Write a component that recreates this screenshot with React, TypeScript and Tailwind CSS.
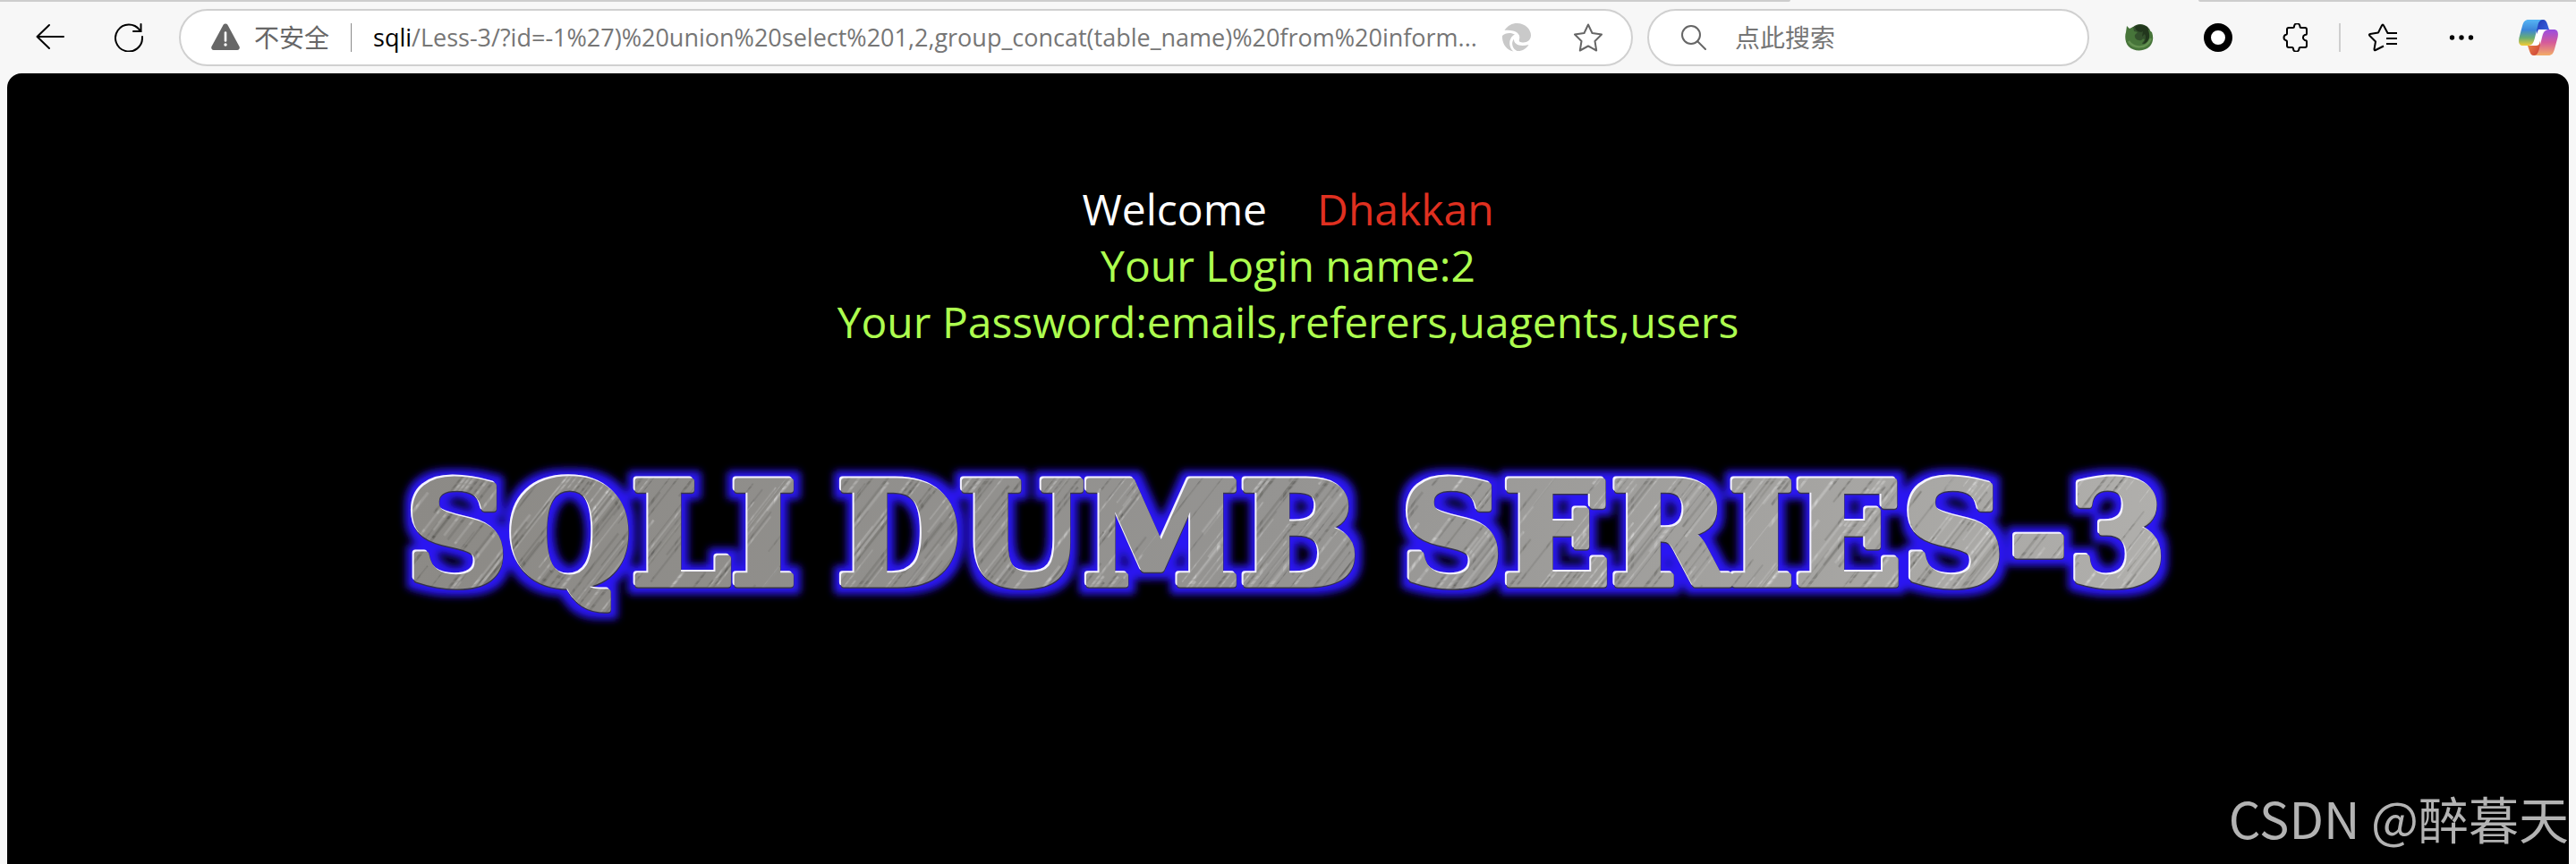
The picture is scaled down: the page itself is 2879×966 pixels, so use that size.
const SANS = "font-['Open_Sans','Noto_Sans_CJK_SC',sans-serif]";

function BackIcon() {
  return (
    <svg className="size-8" viewBox="0 0 32 32" fill="none" stroke="#000" strokeWidth="2" strokeLinecap="round" strokeLinejoin="round">
      <path d="M31 15H1.500M15 2L1.500 15L15 28" />
    </svg>
  );
}

function ReloadIcon() {
  return (
    <svg className="size-8" viewBox="0 0 32 32" fill="none" stroke="#000" strokeWidth="2" strokeLinecap="round">
      <path d="M31 15V16A15 15 0 1 1 28 7.500M29.500 1V9H21" />
    </svg>
  );
}

function WarningIcon() {
  return (
    <svg className="size-8 shrink-0" viewBox="0 0 32 32">
      <path d="M13.600 1.800a2.800 2.800 0 0 1 4.800 0L31.500 26a2.800 2.800 0 0 1-2.400 4H2.900a2.800 2.800 0 0 1-2.400-4Z" fill="#676767" />
      <path d="M16 10.500v9" stroke="#fff" strokeWidth="2.600" strokeLinecap="round" />
      <circle cx="16" cy="24" r="1.700" fill="#fff" />
    </svg>
  );
}

function SwirlIcon() {
  return (
    <svg className="size-8" viewBox="0 0 32 32" fill="#c9c9c9">
      <path d="M2.500 8C6 2.500 11 0 16.500 0C25.500 0 32 7 32 13.500C32 18.500 28 21.500 23.500 21.500C20 21.500 18 20.500 19 18C20.500 13.500 17 9.500 12 8.500C8 7.500 5 7.500 2.500 8Z" />
      <path d="M0 14C3 10.500 10 10 14 12.500C9.500 14.500 7.500 20 8.500 25C9 27.500 10.500 30 12.500 31.500C4 29.500-.500 22 0 14Z" />
      <path d="M13 17.500C12.500 23 19 27 29.500 24C27 28.500 22 31.500 16.500 31C11 28.500 9.500 21.500 13 17.500Z" />
    </svg>
  );
}

function StarIcon() {
  return (
    <svg className="size-8" viewBox="0 0 32 32" fill="none" stroke="#666" strokeWidth="2" strokeLinejoin="round">
      <path d="M16 1.500L20.500 11L31 12.500L23.500 20L25.200 30.500L16 25.500L6.800 30.500L8.500 20L1 12.500L11.500 11Z" />
    </svg>
  );
}

function SearchIcon() {
  return (
    <svg className="size-7 shrink-0" viewBox="0 0 28 28" fill="none" stroke="#666" strokeWidth="2" strokeLinecap="round">
      <circle cx="11" cy="11" r="10" />
      <path d="M18 18L27 27" />
    </svg>
  );
}

function GreenBallIcon() {
  return (
    <svg className="size-8" viewBox="0 0 32 32">
      <circle cx="17" cy="13" r="12" fill="#33502c" />
      <path d="M2 3L5 6L9 4L10 9L14 10L11 13C10 17 14 20 18 19C20 18 19 17 22 18C20 22 16 24 22 23C28 20 27 12 26 7L30 10C33 18 30 25 25 28C18 32 9 31 4 26C0 22-.500 14 1 10Z" fill="#47753a" />
      <path d="M11 4C15 1 20 2 25 4L27 12C28 17 25 22 20 23C23 20 24 15 22 12L19 15L20 9C17 11 14 9 12 7Z" fill="#22371d" />
      <path d="M4 20C9 28 24 30 29 17" fill="none" stroke="#639150" strokeWidth="2.500" />
    </svg>
  );
}

function RingIcon() {
  return (
    <svg className="size-8" viewBox="0 0 32 32">
      <circle cx="16" cy="16" r="12" fill="#fff" stroke="#000" strokeWidth="8" />
    </svg>
  );
}

function PuzzleIcon() {
  return (
    <svg className="size-8" viewBox="0 0 32 32" fill="none" stroke="#000" strokeWidth="2" strokeLinejoin="round">
      <path d="M7 5H11.500Q13 5 13 3.500A3.200 3.200 0 0 1 19.500 3.500Q19.500 5 21 5H25Q27 5 27 7V11.500Q27 13 25 13A3.200 3.200 0 0 0 25 19Q27 19 27 20.500V25Q27 27 25 27H20Q18.500 27 18.500 28.500A3.200 3.200 0 0 1 12 28.500Q12 27 10.500 27H7Q5 27 5 25V20.500Q5 19.500 4 19.200A3.300 3.300 0 0 1 4 12.800Q5 12.500 5 11.500V7Q5 5 7 5Z" />
    </svg>
  );
}

function FavoritesIcon() {
  return (
    <svg className="size-8" viewBox="0 0 32 32" fill="none" stroke="#000" strokeWidth="2" strokeLinejoin="round">
      <path d="M32 11H21.500L17 2.500Q16 .5 15 2.500L11 10.500L2 12Q0 12.500 1.500 14L8 20.500L6.500 29Q6.500 31 8 30L17 25.500M20 17H32M20 23H32" />
    </svg>
  );
}

function MoreIcon() {
  return (
    <svg className="size-8" viewBox="0 0 32 32">
      <circle cx="5.500" cy="16" r="2.700" />
      <circle cx="16" cy="16" r="2.700" />
      <circle cx="26.500" cy="16" r="2.700" />
    </svg>
  );
}

function CopilotIcon() {
  return (
    <svg className="h-10 w-11" viewBox="0 0 44 40">
      <defs>
        <linearGradient id="cp-left" x1="0" y1="0" x2="0" y2="1">
          <stop offset="0" stopColor="#56b5f5" />
          <stop offset=".4" stopColor="#3c86d8" />
          <stop offset=".7" stopColor="#69ad72" />
          <stop offset="1" stopColor="#f4cc35" />
        </linearGradient>
        <linearGradient id="cp-right" x1="0" y1="0" x2="0" y2="1">
          <stop offset="0" stopColor="#984de2" />
          <stop offset=".5" stopColor="#d55b9a" />
          <stop offset="1" stopColor="#f3ad66" />
        </linearGradient>
        <linearGradient id="cp-top" x1="0" y1="0" x2="1" y2="1">
          <stop offset="0" stopColor="#2038b5" />
          <stop offset="1" stopColor="#3f6ee8" />
        </linearGradient>
        <linearGradient id="cp-bottom" x1="0" y1="0" x2="1" y2="1">
          <stop offset="0" stopColor="#f4924a" />
          <stop offset="1" stopColor="#c93c36" />
        </linearGradient>
      </defs>
      <path d="M20 0H27C30 0 31 2 32 5L34 11H27C23 11 22 14 20 19Z" fill="url(#cp-top)" />
      <path d="M24 40H17C14 40 13 38 12 35L10 29H17C21 29 22 26 24 21Z" fill="url(#cp-bottom)" />
      <path d="M22 11H29C27 13 26.500 15 26 17L23 27C22 29 20 29 17 29H15Z" fill="#fff" />
      <path d="M11 0H27C24 0 22 3 21.500 6L17.500 22C16 27 14 29 10 29H5C0 29-.500 25 .5 20L4 7C5.500 2 7 0 11 0Z" fill="url(#cp-left)" />
      <path d="M33 40H17C20 40 21.500 37 22.500 34L26.500 18C28 13 30 11 34 11H39C44 11 44.500 15 43.500 20L40 33C38.500 38 37 40 33 40Z" fill="url(#cp-right)" />
    </svg>
  );
}

function Toolbar() {
  return (
    <header className="flex h-[82px] items-center pt-[2px] text-[28px] leading-10">
      <nav className="flex w-[200px] shrink-0 items-center gap-14 pl-10">
        <button type="button" aria-label="Back"><BackIcon /></button>
        <button type="button" aria-label="Reload"><ReloadIcon /></button>
      </nav>
      <div className="flex h-16 min-w-0 flex-1 items-center rounded-full border-2 border-[#d0d0d0] bg-white pl-[34px] pr-8">
        <WarningIcon />
        <span className="ml-4 shrink-0 text-[#676767]">不安全</span>
        <span className="ml-6 h-8 w-px shrink-0 bg-[#8a8a8a]" />
        <a href="#page" className="ml-6 min-w-0 flex-1 truncate text-[27px] text-[#767676]">
          <span className="text-black">sqli</span>/Less-3/?id=-1%27)%20union%20select%201,2,group_concat(table_name)%20from%20inform...
        </a>
        <div className="ml-4 flex shrink-0 gap-12">
          <button type="button" aria-label="Swirl"><SwirlIcon /></button>
          <button type="button" aria-label="Favorite"><StarIcon /></button>
        </div>
      </div>
      <label className="ml-4 flex h-16 w-[494px] shrink-0 items-center gap-8 rounded-full border-2 border-[#d0d0d0] bg-white pl-9 pr-6">
        <SearchIcon />
        <input type="text" aria-label="点此搜索" placeholder="点此搜索" className="min-w-0 flex-1 bg-transparent outline-none placeholder:text-[#767676]" />
      </label>
      <div className="ml-10 mr-5 flex shrink-0 items-center">
        <div className="flex gap-14">
          <button type="button" aria-label="Green ball"><GreenBallIcon /></button>
          <button type="button" aria-label="Ring"><RingIcon /></button>
          <button type="button" aria-label="Extensions"><PuzzleIcon /></button>
        </div>
        <span className="mx-[31px] h-8 w-[2px] bg-[#cfcfcf]" />
        <div className="flex items-center gap-12">
          <div className="flex gap-14">
            <button type="button" aria-label="Favorites"><FavoritesIcon /></button>
            <button type="button" aria-label="More"><MoreIcon /></button>
          </div>
          <button type="button" aria-label="Copilot"><CopilotIcon /></button>
        </div>
      </div>
    </header>
  );
}

const TILE = 311;

// Irregular fine scratches of the brushed metal, as vertical strokes of one tile.
const scratches = Array.from({ length: 96 }, (_, i) => {
  const noise = Math.abs(Math.sin(i * 12.9898 + 4.1) * 43758.5453) % 1;
  const other = Math.abs(Math.sin(i * 78.233 + 1.7) * 24634.6345) % 1;
  return {
    x: noise * TILE,
    y: other * TILE,
    length: 60 + noise * 160,
    width: 1 + other * 2,
    light: i % 2 === 0,
  };
});

function TitleWords() {
  return (
    <>
      <tspan x="28">SQLI</tspan>
      <tspan x="510">DUMB</tspan>
      <tspan x="1140">SERIES-3</tspan>
    </>
  );
}

function Banner() {
  return (
    <svg className="w-[2060px] max-w-full" viewBox="0 0 2060 250" role="img" aria-label="SQLI DUMB SERIES-3" fontFamily="'DejaVu Serif', serif" fontWeight="700" fontSize="158">
      <defs>
        <linearGradient id="metal" x1="0" y1="0" x2="1" y2="0">
          <stop offset="0" stopColor="#8c8a86" />
          <stop offset=".5" stopColor="#959492" />
          <stop offset="1" stopColor="#b0afac" />
        </linearGradient>
        <pattern id="brushed" width={TILE} height={TILE} patternUnits="userSpaceOnUse" patternTransform="rotate(38)">
          {scratches.map((s, i) => (
            <path
              key={i}
              d={`M${s.x} ${s.y}v${s.length}M${s.x} ${s.y - TILE}v${s.length}`}
              stroke={s.light ? "#fff" : "#2a2a26"}
              strokeWidth={s.width}
              opacity=".15"
            />
          ))}
        </pattern>
        <filter id="glow" x="-5%" y="-30%" width="110%" height="160%">
          <feMorphology operator="dilate" radius="7" />
          <feGaussianBlur stdDeviation="4" />
        </filter>
      </defs>
      <g strokeLinejoin="round" transform="translate(16 34)">
        <text y="142" fill="#2a17f2" stroke="#2a17f2" strokeWidth="9" filter="url(#glow)"><TitleWords /></text>
        <text y="143" fill="#35334c" stroke="#35334c" strokeWidth="8" aria-hidden="true"><TitleWords /></text>
        <g transform="translate(-2 -2)">
          <text y="142" fill="#f4f2ff" stroke="#f4f2ff" strokeWidth="7" aria-hidden="true"><TitleWords /></text>
        </g>
        <text y="142" fill="url(#metal)" stroke="url(#metal)" strokeWidth="7" aria-hidden="true"><TitleWords /></text>
        <text y="142" fill="url(#brushed)" stroke="url(#brushed)" strokeWidth="7" aria-hidden="true"><TitleWords /></text>
      </g>
    </svg>
  );
}

export default function App() {
  return (
    <div className={`flex min-h-screen flex-col bg-[#f7f7f7] ${SANS}`}>
      <div className="relative">
        <div className="absolute inset-x-0 top-0 flex justify-between">
          <span className="h-[2px] w-[2001px] rounded-br bg-[#cdcdcd]" />
          <span className="h-[2px] w-[422px] rounded-bl bg-[#cdcdcd]" />
        </div>
        <Toolbar />
      </div>
      <main id="page" className="relative mx-2 flex flex-1 flex-col items-center rounded-t-2xl bg-black pt-[120px]">
        <p className="flex gap-14 text-[48px] leading-[63px]">
          <span className="text-white">Welcome</span>
          <span className="text-[#e03020]">Dhakkan</span>
        </p>
        <p className="text-center text-[48px] leading-[63px] text-[#adff4f]">
          Your Login name:2
          <br />
          Your Password:emails,referers,uagents,users
        </p>
        <div className="mt-[86px] flex w-full justify-center">
          <Banner />
        </div>
        <p className="absolute bottom-3 right-0 whitespace-nowrap font-['Noto_Sans_CJK_SC',sans-serif] text-[56px] leading-[80px] text-[#b3b3b3]">
          CSDN @醉暮天
        </p>
      </main>
    </div>
  );
}
